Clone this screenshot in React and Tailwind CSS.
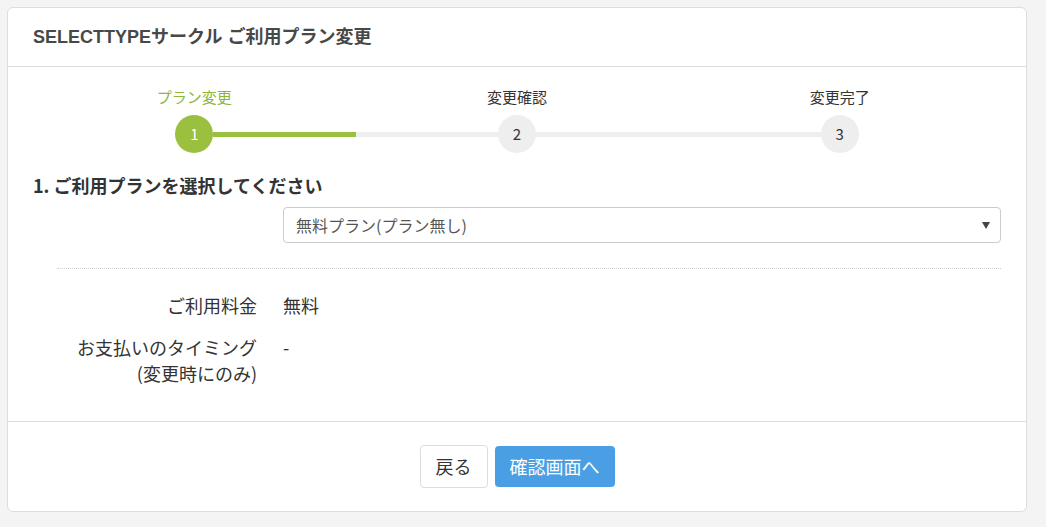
import { useState } from "react";

const steps = [
  { no: 1, label: "プラン変更" },
  { no: 2, label: "変更確認" },
  { no: 3, label: "変更完了" },
];

function Stepper({ current }) {
  return (
    <div className="grid grid-cols-3">
      {steps.map((s, i) => {
        const done = s.no <= current;
        return (
          <div key={s.no} className="flex flex-col items-center">
            <div className={"text-[15px] leading-[20px] " + (done ? "text-[#8db63a]" : "text-[#333]")}>
              {s.label}
            </div>
            <div className="mt-[8px] flex w-full items-center">
              <div className={"h-[5px] flex-1 " + (i === 0 ? "bg-transparent" : "bg-[#eeeeee]")} />
              <div
                className={
                  "flex h-[38px] w-[38px] items-center justify-center rounded-full text-[15px] " +
                  (done ? "bg-[#9bc03f] text-white" : "bg-[#eeeeee] text-[#333]")
                }
              >
                {s.no}
              </div>
              <div
                className={
                  "h-[5px] flex-1 " +
                  (i === steps.length - 1 ? "bg-transparent" : done ? "bg-[#9bc03f]" : "bg-[#eeeeee]")
                }
              />
            </div>
          </div>
        );
      })}
    </div>
  );
}

export default function App() {
  const [plan, setPlan] = useState("free");

  return (
    <div
      className="min-h-[527px] bg-[#f4f4f4] pl-[7px] pr-[19px] pt-[7px] pb-[15px]"
      style={{ fontFamily: '"Noto Sans CJK JP", "Liberation Sans", sans-serif' }}
    >
      <div className="rounded-[6px] border border-[#dddddd] bg-white">
        {/* header */}
        <div className="flex h-[59px] items-center border-b border-[#dddddd] px-[25px]">
          <h1
            className="text-[18px] font-bold text-[#484848]"
            style={{ fontFamily: '"Liberation Sans", "Noto Sans CJK JP", sans-serif' }}
          >
            SELECTTYPEサークル ご利用プラン変更
          </h1>
        </div>

        {/* body */}
        <div className="px-[25px] pt-[20px] pb-[35px]">
          <Stepper current={1} />

          <h2 className="mt-[20px] text-[18px] leading-[24px] font-bold text-[#333]">
            1. ご利用プランを選択してください
          </h2>

          <div className="relative mt-[10px] ml-[250px]">
            <select
              value={plan}
              onChange={(e) => setPlan(e.target.value)}
              className="h-[36px] w-full appearance-none rounded-[4px] border border-[#cccccc] bg-white pl-[12px] text-[16px] text-[#555]"
            >
              <option value="free">無料プラン(プラン無し)</option>
              <option value="light">ライトプラン</option>
              <option value="standard">スタンダードプラン</option>
            </select>
            <svg
              className="pointer-events-none absolute right-[11px] top-[15px]"
              width="8"
              height="7"
              viewBox="0 0 8 7"
            >
              <path d="M0 0 H8 L4 7 Z" fill="#444" />
            </svg>
          </div>

          <div className="mt-[25px] ml-[24px] border-t border-dotted border-[#cfcfcf]" />

          <div className="mt-[23px] flex text-[18px] leading-[26px] text-[#333]">
            <div className="w-[250px] pr-[26px] text-right">ご利用料金</div>
            <div>無料</div>
          </div>
          <div className="mt-[16px] flex text-[18px] leading-[26px] text-[#333]">
            <div className="w-[250px] pr-[26px] text-right">
              お支払いのタイミング
              <br />
              (変更時にのみ)
            </div>
            <div>-</div>
          </div>
        </div>

        {/* footer */}
        <div className="flex items-center justify-center gap-[7px] border-t border-[#dddddd] pt-[23px] pb-[23px]">
          <button className="h-[43px] w-[68px] rounded-[4px] border border-[#dddddd] bg-white text-[18px] text-[#333]">
            戻る
          </button>
          <button className="h-[41px] w-[120px] rounded-[4px] bg-[#4a9fe4] text-[18px] text-white">
            確認画面へ
          </button>
        </div>
      </div>
    </div>
  );
}
